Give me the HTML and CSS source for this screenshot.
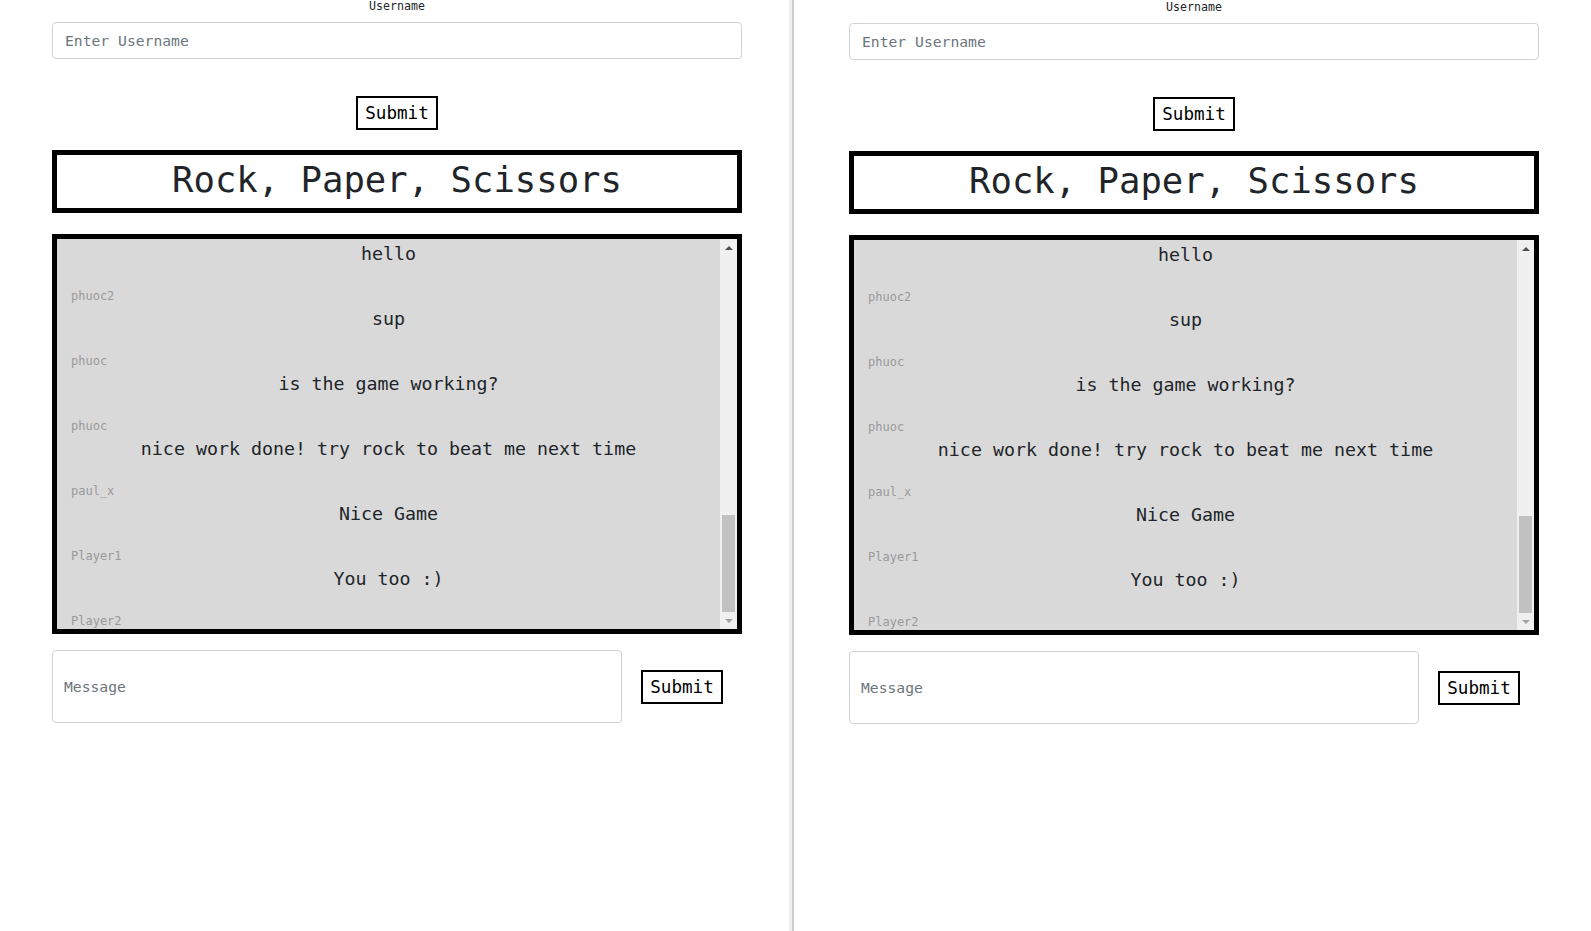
FILE: index.html
```html
<!DOCTYPE html>
<html lang="en">
<head>
<meta charset="utf-8">
<title>Rock, Paper, Scissors</title>
<link rel="stylesheet" href="styles.css">
</head>
<body>
<div class="screen">
  <div class="pane pane-left">
    <div class="app">
      <form class="user-form">
        <label class="user-label" for="u1">Username</label>
        <input class="field user-input" id="u1" type="text" placeholder="Enter Username">
        <button class="btn btn-user" type="button">Submit</button>
      </form>
      <div class="title-box"><h1 class="title">Rock, Paper, Scissors</h1></div>
      <div class="chat">
        <div class="messages">
          <div class="msg"><div class="msg-text">hello</div><div class="msg-name">phuoc2</div></div>
          <div class="msg"><div class="msg-text">sup</div><div class="msg-name">phuoc</div></div>
          <div class="msg"><div class="msg-text">is the game working?</div><div class="msg-name">phuoc</div></div>
          <div class="msg"><div class="msg-text">nice work done! try rock to beat me next time</div><div class="msg-name">paul_x</div></div>
          <div class="msg"><div class="msg-text">Nice Game</div><div class="msg-name">Player1</div></div>
          <div class="msg"><div class="msg-text">You too :)</div><div class="msg-name">Player2</div></div>
        </div>
        <div class="scrollbar">
          <div class="sb-btn"><span class="arrow-up"></span></div>
          <div class="sb-track"><div class="sb-thumb"></div></div>
          <div class="sb-btn"><span class="arrow-down"></span></div>
        </div>
      </div>
      <div class="send-row">
        <input class="field msg-input" type="text" placeholder="Message">
        <button class="btn btn-send" type="button">Submit</button>
      </div>
    </div>
  </div>
  <div class="divider"></div>
  <div class="pane pane-right">
    <div class="app">
      <form class="user-form">
        <label class="user-label" for="u2">Username</label>
        <input class="field user-input" id="u2" type="text" placeholder="Enter Username">
        <button class="btn btn-user" type="button">Submit</button>
      </form>
      <div class="title-box"><h1 class="title">Rock, Paper, Scissors</h1></div>
      <div class="chat">
        <div class="messages">
          <div class="msg"><div class="msg-text">hello</div><div class="msg-name">phuoc2</div></div>
          <div class="msg"><div class="msg-text">sup</div><div class="msg-name">phuoc</div></div>
          <div class="msg"><div class="msg-text">is the game working?</div><div class="msg-name">phuoc</div></div>
          <div class="msg"><div class="msg-text">nice work done! try rock to beat me next time</div><div class="msg-name">paul_x</div></div>
          <div class="msg"><div class="msg-text">Nice Game</div><div class="msg-name">Player1</div></div>
          <div class="msg"><div class="msg-text">You too :)</div><div class="msg-name">Player2</div></div>
        </div>
        <div class="scrollbar">
          <div class="sb-btn"><span class="arrow-up"></span></div>
          <div class="sb-track"><div class="sb-thumb"></div></div>
          <div class="sb-btn"><span class="arrow-down"></span></div>
        </div>
      </div>
      <div class="send-row">
        <input class="field msg-input" type="text" placeholder="Message">
        <button class="btn btn-send" type="button">Submit</button>
      </div>
    </div>
  </div>
</div>
</body>
</html>
```

FILE: styles.css
```css
* {
  box-sizing: border-box;
}

html, body {
  margin: 0;
  padding: 0;
  background: #ffffff;
}

body {
  font-family: "DejaVu Sans Mono", "Liberation Mono", monospace;
  color: #212529;
}

.screen {
  display: flex;
  width: 1591px;
  height: 931px;
  overflow: hidden;
}

.pane {
  height: 931px;
  overflow: hidden;
}

.pane-left {
  width: 789px;
  padding-left: 52px;
}

.pane-right {
  flex: 1;
  padding-left: 55px;
  padding-top: 1px;
}

.divider {
  width: 5px;
  height: 931px;
  background: linear-gradient(to right, #efefef 0, #efefef 3px, #cdcdcd 3px, #cdcdcd 5px);
}

.app {
  width: 690px;
  display: flex;
  flex-direction: column;
}

.user-form {
  display: flex;
  flex-direction: column;
  align-items: center;
  margin: 0;
}

.user-label {
  font-size: 11.6px;
  line-height: 12px;
  height: 12px;
  color: #212529;
}

.field {
  width: 100%;
  border: 1px solid #ced4da;
  border-radius: 4px;
  background: #fff;
  font-family: "DejaVu Sans Mono", "Liberation Mono", monospace;
  font-size: 14.7px;
  color: #495057;
  outline: none;
}

.field::placeholder {
  color: #6c757d;
  opacity: 1;
}

.user-input {
  margin-top: 10px;
  height: 37px;
  padding: 0 12px;
}

.btn {
  font-family: "DejaVu Sans Mono", "Liberation Mono", monospace;
  font-size: 17.6px;
  color: #000;
  background: #fff;
  border: 2px solid #000;
  border-radius: 0;
  height: 34px;
  line-height: 30px;
  padding: 0 7px;
  margin: 0;
}

.btn-user {
  margin-top: 37px;
}

.title-box {
  margin-top: 20px;
  height: 63px;
  border: 5px solid #000;
  padding-bottom: 4px;
  display: flex;
  align-items: center;
  justify-content: center;
}

.title {
  margin: 0;
  font-weight: normal;
  font-size: 35.6px;
  line-height: 44px;
  color: #212529;
}

.chat {
  margin-top: 21px;
  height: 400px;
  border: 5px solid #000;
  background: #d9d9d9;
  display: flex;
}

.messages {
  flex: 1;
  overflow: hidden;
  padding-top: 4px;
}

.msg-text {
  font-size: 18.3px;
  line-height: 22px;
  text-align: center;
  color: #212529;
  white-space: nowrap;
  margin-bottom: 24px;
}

.msg-name {
  font-size: 12px;
  line-height: 14px;
  color: #9a9a9a;
  padding-left: 14px;
  margin-bottom: 5px;
}

.scrollbar {
  width: 17px;
  background: #f0f0f0;
  display: flex;
  flex-direction: column;
}

.sb-btn {
  height: 17px;
  display: flex;
  align-items: center;
  justify-content: center;
}

.arrow-up {
  width: 0;
  height: 0;
  border-left: 4px solid transparent;
  border-right: 4px solid transparent;
  border-bottom: 4px solid #505050;
}

.arrow-down {
  width: 0;
  height: 0;
  border-left: 4px solid transparent;
  border-right: 4px solid transparent;
  border-top: 4px solid #a3a3a3;
}

.sb-track {
  flex: 1;
  display: flex;
  flex-direction: column;
  justify-content: flex-end;
  padding: 0 2px;
}

.sb-thumb {
  height: 97px;
  background: #c1c1c1;
}

.send-row {
  margin-top: 16px;
  display: grid;
  grid-template-columns: 570px 1fr;
  align-items: center;
}

.msg-input {
  height: 73px;
  padding: 0 11px;
}

.btn-send {
  justify-self: center;
}
```
